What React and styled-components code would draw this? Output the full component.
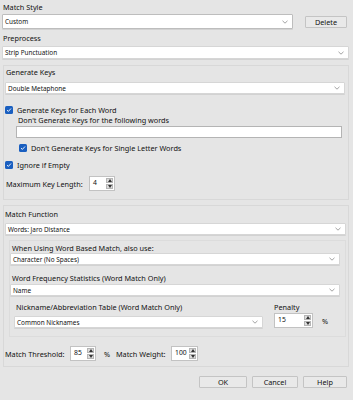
import React from "react";
import styled, { createGlobalStyle } from "styled-components";

const GlobalStyle = createGlobalStyle`
  html, body {
    margin: 0;
    padding: 0;
    background: #e5e5e5;
  }
  body {
    font-family: "Noto Sans", "Open Sans", sans-serif;
    font-size: 7.3px;
    color: #111;
  }
`;

const Dialog = styled.div`
  width: 353px;
  height: 400px;
  box-sizing: border-box;
  padding: 2px 4px 0 2px;
  background: #e5e5e5;
  overflow: hidden;
`;

const Label = styled.div`
  line-height: ${(p) => p.$lh || 11}px;
  height: ${(p) => p.$lh || 11}px;
  margin-top: ${(p) => p.$mt || 0}px;
  padding-left: ${(p) => p.$pl || 0}px;
  white-space: nowrap;
`;

const Row = styled.div`
  display: flex;
  align-items: ${(p) => p.$align || "center"};
  margin-top: ${(p) => p.$mt || 0}px;
  padding-left: ${(p) => p.$pl || 0}px;
`;

const SelectBox = styled.div`
  display: flex;
  align-items: center;
  box-sizing: border-box;
  height: ${(p) => p.$h || 12}px;
  width: ${(p) => (p.$w ? `${p.$w}px` : "auto")};
  margin: ${(p) => p.$mt || 0}px ${(p) => p.$mr || 0}px 0 ${(p) => p.$ml || 0}px;
  padding: 0 4px 0 2px;
  background: #fff;
  border: 1px solid ${(p) => p.$border || "#d6d6d6"};
  border-radius: 1px;
  box-shadow: 0 1px 0 #d2d2d2;
  font-size: 6.4px;
`;

const SelectText = styled.span`
  flex: 1;
  white-space: nowrap;
`;

const Chevron = () => (
  <svg width="6" height="4" viewBox="0 0 6 4">
    <path d="M0.5 0.8 L3 3.2 L5.5 0.8" stroke="#8a8a8a" fill="none" strokeWidth="0.8" />
  </svg>
);

const Select = ({ value, ...rest }) => (
  <SelectBox {...rest}>
    <SelectText>{value}</SelectText>
    <Chevron />
  </SelectBox>
);

const TextInput = styled.div`
  box-sizing: border-box;
  height: 12px;
  margin: 0 6px 0 11px;
  background: #fff;
  border: 1px solid #b4b4b4;
`;

const Button = styled.div`
  box-sizing: border-box;
  width: ${(p) => p.$w}px;
  height: 12px;
  margin-left: ${(p) => p.$ml || 0}px;
  line-height: 10px;
  text-align: center;
  background: #e9e9e9;
  border: 1px solid #c4c4c4;
  border-radius: 1px;
`;

const Panel = styled.div`
  box-sizing: border-box;
  margin: ${(p) => p.$mt || 0}px ${(p) => p.$mr || 0}px 0 ${(p) => p.$ml || 0}px;
  padding: 1px 0 ${(p) => p.$pb || 0}px ${(p) => p.$pl ?? 1}px;
  border: 1px solid ${(p) => p.$border || "#d8d8d8"};
  background: #e5e5e5;
`;

const CheckRow = styled.div`
  display: flex;
  align-items: center;
  gap: 4px;
  height: 10px;
  margin-top: ${(p) => p.$mt || 0}px;
  padding-left: ${(p) => p.$pl || 0}px;
  white-space: nowrap;
`;

const CheckMark = styled.span`
  display: inline-flex;
  align-items: center;
  justify-content: center;
  width: 8px;
  height: 8px;
  border-radius: 1.5px;
  background: #1a5fc0;
`;

const Check = ({ label, ...rest }) => (
  <CheckRow {...rest}>
    <CheckMark>
      <svg width="6" height="6" viewBox="0 0 6 6">
        <path d="M1 3.1 L2.4 4.4 L5 1.5" stroke="#fff" fill="none" strokeWidth="0.9" />
      </svg>
    </CheckMark>
    {label}
  </CheckRow>
);

const SpinBox = styled.div`
  display: flex;
  box-sizing: border-box;
  width: ${(p) => p.$w}px;
  height: 15px;
  margin-left: ${(p) => p.$ml || 0}px;
  padding: 1px;
  background: #fff;
  border: 1px solid #c2c2c2;
  font-size: 6.8px;
`;

const SpinValue = styled.span`
  flex: 1;
  padding-left: 2px;
  line-height: 10px;
`;

const SpinArrows = styled.div`
  display: flex;
  flex-direction: column;
  gap: 1px;
  width: 7px;
`;

const SpinArrow = styled.div`
  flex: 1;
  display: flex;
  align-items: center;
  justify-content: center;
  background: #dcdcdc;
  border: 0.5px solid #b5b5b5;
`;

const Arrow = ({ down }) => (
  <svg width="4" height="3" viewBox="0 0 4 3">
    <path d={down ? "M0 0 L4 0 L2 3 Z" : "M0 3 L4 3 L2 0 Z"} fill="#333" />
  </svg>
);

const Spin = ({ value, ...rest }) => (
  <SpinBox {...rest}>
    <SpinValue>{value}</SpinValue>
    <SpinArrows>
      <SpinArrow>
        <Arrow />
      </SpinArrow>
      <SpinArrow>
        <Arrow down />
      </SpinArrow>
    </SpinArrows>
  </SpinBox>
);

const Text = styled.span`
  display: inline-block;
  width: ${(p) => (p.$w ? `${p.$w}px` : "auto")};
  margin-left: ${(p) => p.$ml || 0}px;
  white-space: nowrap;
`;

const Column = styled.div`
  display: flex;
  flex-direction: column;
  width: ${(p) => (p.$w ? `${p.$w}px` : "auto")};
  margin-left: ${(p) => p.$ml || 0}px;
`;

const Spacer = styled.div`
  height: ${(p) => p.$h}px;
`;

const Footer = styled.div`
  display: flex;
  justify-content: flex-end;
  gap: 5px;
  margin-top: 9px;
  padding-right: 2px;
`;

export default function App() {
  return (
    <>
      <GlobalStyle />
      <Dialog>
        <Label $pl={1}>Match Style</Label>
        <Row $mt={1}>
          <Select value="Custom" $w={291} $h={15} $border="#bdbdbd" />
          <Button $w={42} $ml={12}>Delete</Button>
        </Row>
        <Label $mt={4} $pl={1}>Preprocess</Label>
        <Select value="Strip Punctuation" $mt={2} $h={13} />

        <Panel $mt={6} $ml={1} $pb={8}>
          <Label $pl={1}>Generate Keys</Label>
          <Select value="Double Metaphone" $mt={4} $mr={3} />
          <Check label="Generate Keys for Each Word" $mt={11} />
          <Label $pl={13}>Don't Generate Keys for the following words</Label>
          <TextInput />
          <Check label="Don't Generate Keys for Single Letter Words" $mt={5} $pl={14} />
          <Check label="Ignore if Empty" $mt={7} />
          <Row $mt={6} $pl={1}>
            <Text $w={83}>Maximum Key Length:</Text>
            <Spin value="4" $w={26} />
          </Row>
        </Panel>

        <Panel $mt={5} $ml={1} $pb={5}>
          <Label $mt={2}>Match Function</Label>
          <Select value="Words: Jaro Distance" $mt={3} $mr={2} />
          <Panel $mt={5} $ml={4} $mr={2} $pl={0} $border="#dcdcdc">
            <Label $mt={1} $pl={2} $lh={10}>When Using Word Based Match, also use:</Label>
            <Select value="Character (No Spaces)" $mr={5} />
            <Label $mt={8} $pl={2} $lh={10}>Word Frequency Statistics (Word Match Only)</Label>
            <Select value="Name" $mt={1} $mr={5} />
            <Row $mt={6} $align="flex-start">
              <Column $w={249} $ml={4}>
                <Label $lh={10} $pl={2}>Nickname/Abbreviation Table (Word Match Only)</Label>
                <Select value="Common Nicknames" $mt={4} />
              </Column>
              <Column $ml={11}>
                <Label $lh={10}>Penalty</Label>
                <Row $mt={1}>
                  <Spin value="15" $w={39} />
                  <Text $ml={9}>%</Text>
                </Row>
              </Column>
            </Row>
            <Spacer $h={8} />
          </Panel>
          <Row $mt={9}>
            <Text $w={65}>Match Threshold:</Text>
            <Spin value="85" $w={26} />
            <Text $w={12} $ml={8}>%</Text>
            <Text $w={55}>Match Weight:</Text>
            <Spin value="100" $w={27} />
          </Row>
        </Panel>

        <Footer>
          <Button $w={48}>OK</Button>
          <Button $w={46}>Cancel</Button>
          <Button $w={44}>Help</Button>
        </Footer>
      </Dialog>
    </>
  );
}
